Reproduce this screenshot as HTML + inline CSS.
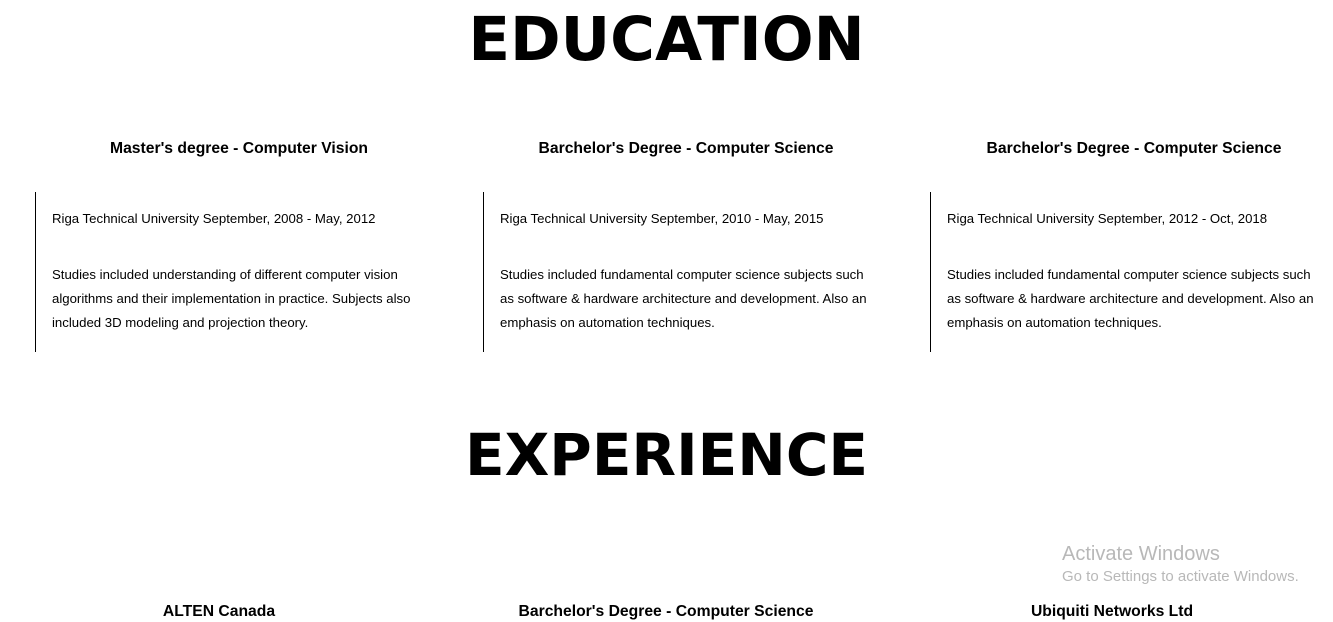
<!DOCTYPE html>
<html><head><style>
body{margin:0;width:1333px;height:614px;overflow:hidden;background:#fff;font-family:"Liberation Sans",Arial,sans-serif;color:#000;position:relative}
.h{position:absolute;left:0;width:1333px;text-align:center;font-family:"Comic Sans MS","DejaVu Sans",sans-serif;font-weight:bold;font-size:62px;line-height:1}
.t{position:absolute;width:460px;text-align:center;font-weight:bold;font-size:15.7px;line-height:20px}
.box{position:absolute;top:192px;height:160px;border-left:1px solid #000;width:420px;font-size:13.2px;line-height:24px;padding-left:16px;box-sizing:border-box}
.box p{margin:0;position:absolute;left:16px;width:375px}
.aw{position:absolute;left:1062px;color:#b8b8b8}
</style></head><body>
<div class="h" style="top:9px;font-size:61px">EDUCATION</div>
<div class="t" style="left:9px;top:139px">Master's degree - Computer Vision</div>
<div class="t" style="left:456px;top:139px">Barchelor's Degree - Computer Science</div>
<div class="t" style="left:904px;top:139px">Barchelor's Degree - Computer Science</div>
<div class="box" style="left:35px"><p style="top:15px">Riga Technical University September, 2008 - May, 2012</p><p style="top:71px">Studies included understanding of different computer vision algorithms and their implementation in practice. Subjects also included 3D modeling and projection theory.</p></div>
<div class="box" style="left:483px"><p style="top:15px">Riga Technical University September, 2010 - May, 2015</p><p style="top:71px">Studies included fundamental computer science subjects such as software &amp; hardware architecture and development. Also an emphasis on automation techniques.</p></div>
<div class="box" style="left:930px;width:403px"><p style="top:15px">Riga Technical University September, 2012 - Oct, 2018</p><p style="top:71px">Studies included fundamental computer science subjects such as software &amp; hardware architecture and development. Also an emphasis on automation techniques.</p></div>
<div class="h" style="top:426px;font-size:58px">EXPERIENCE</div>
<div class="aw" style="top:543px;font-size:20px">Activate Windows</div>
<div class="aw" style="top:568px;font-size:15px">Go to Settings to activate Windows.</div>
<div class="t" style="left:-11px;top:602px">ALTEN Canada</div>
<div class="t" style="left:436px;top:602px">Barchelor's Degree - Computer Science</div>
<div class="t" style="left:882px;top:602px">Ubiquiti Networks Ltd</div>
</body></html>
